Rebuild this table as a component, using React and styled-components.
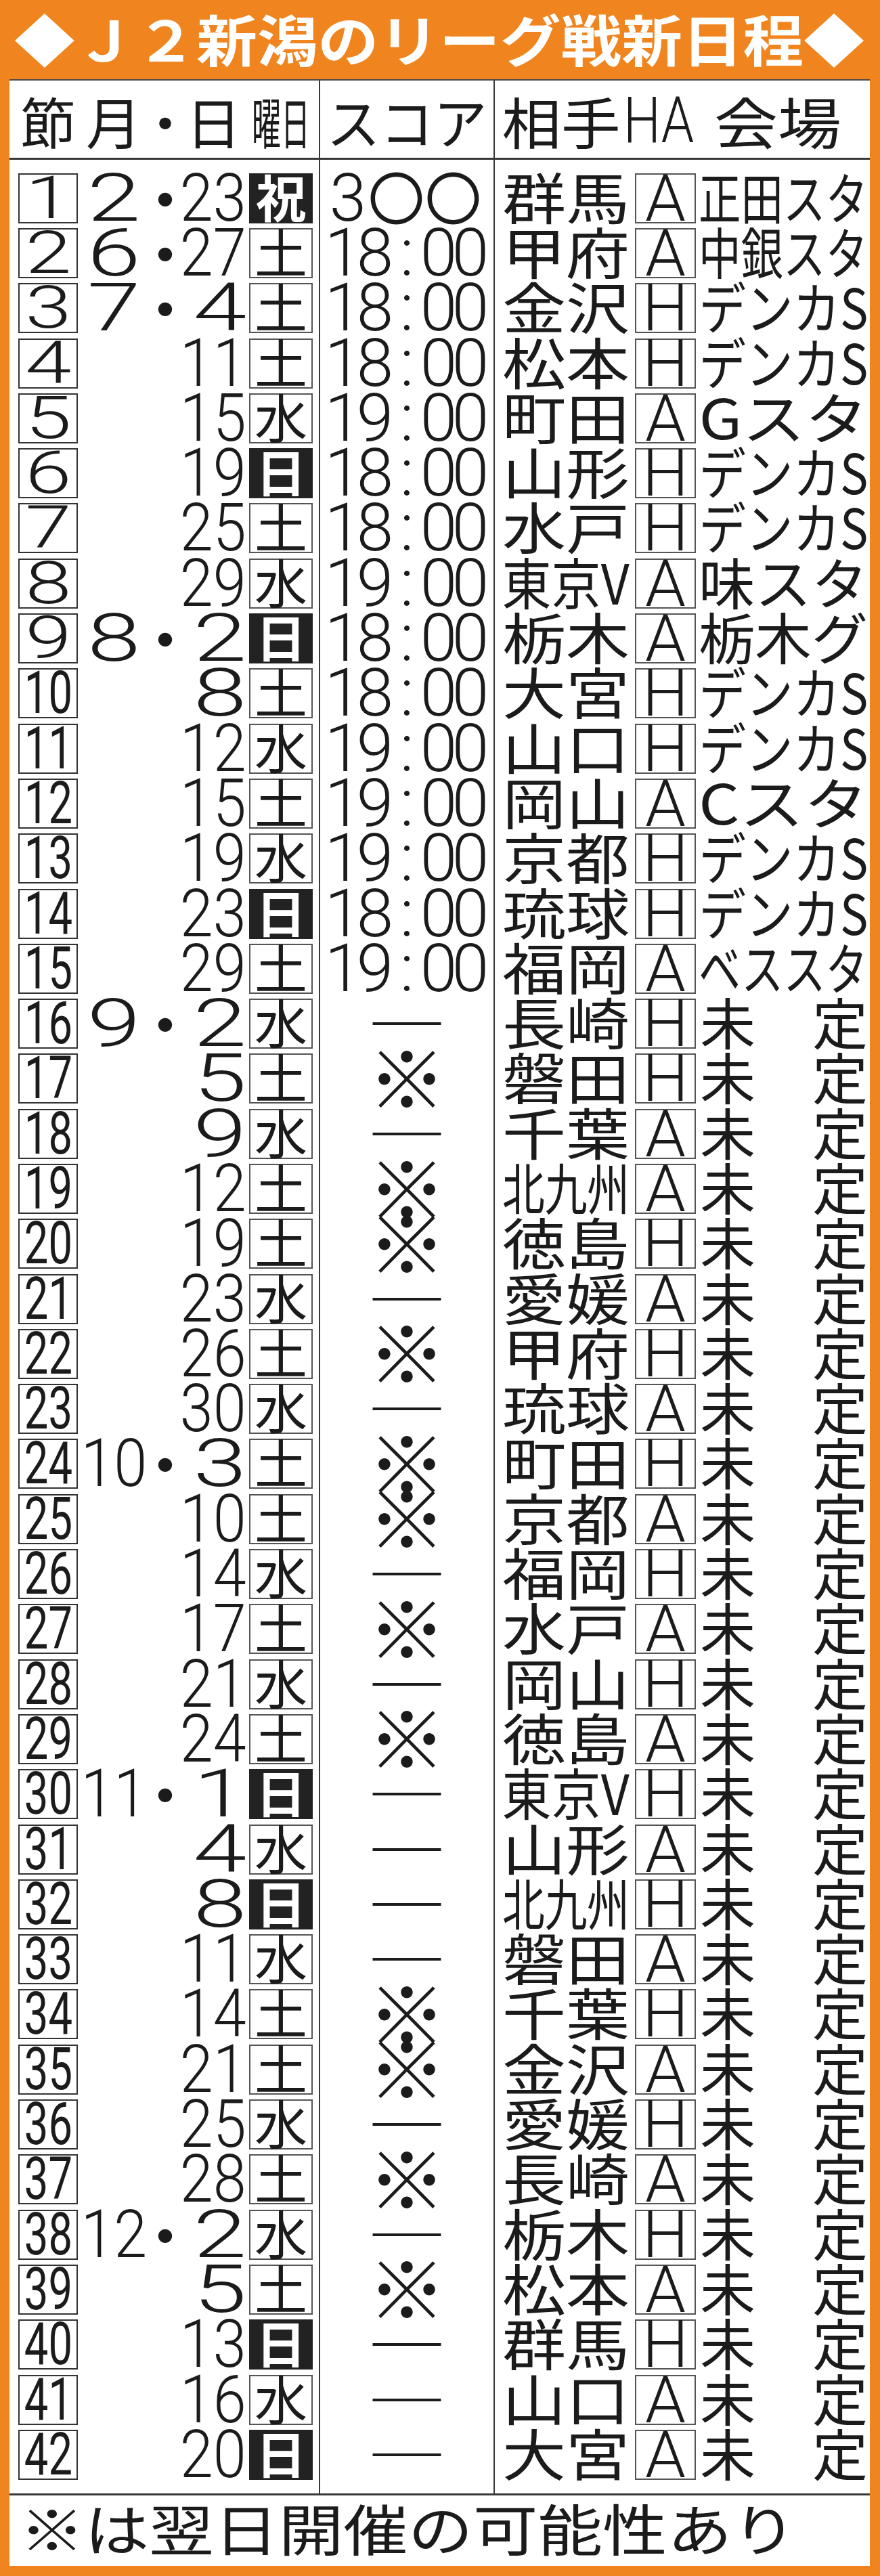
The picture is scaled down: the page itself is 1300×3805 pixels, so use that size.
import React, { useLayoutEffect, useRef, useState } from "react";
import styled, { createGlobalStyle } from "styled-components";

const ORANGE = "#f0851f";
const INK = "#1b1b1b";
const LINE = "#383838";
const JP = `"Noto Sans CJK JP", "Noto Sans", sans-serif`;
const NUM = `Roboto, "Liberation Sans", sans-serif`;
const ROW_H = 81.3;

// no, month, day, weekday, score, opponent, H/A, venue
const games = [
  [1, 2, 23, "祝", "3〇〇", "群馬", "A", "正田スタ"],
  [2, 6, 27, "土", "18:00", "甲府", "A", "中銀スタ"],
  [3, 7, 4, "土", "18:00", "金沢", "H", "デンカS"],
  [4, null, 11, "土", "18:00", "松本", "H", "デンカS"],
  [5, null, 15, "水", "19:00", "町田", "A", "Gスタ"],
  [6, null, 19, "日", "18:00", "山形", "H", "デンカS"],
  [7, null, 25, "土", "18:00", "水戸", "H", "デンカS"],
  [8, null, 29, "水", "19:00", "東京V", "A", "味スタ"],
  [9, 8, 2, "日", "18:00", "栃木", "A", "栃木グ"],
  [10, null, 8, "土", "18:00", "大宮", "H", "デンカS"],
  [11, null, 12, "水", "19:00", "山口", "H", "デンカS"],
  [12, null, 15, "土", "19:00", "岡山", "A", "Cスタ"],
  [13, null, 19, "水", "19:00", "京都", "H", "デンカS"],
  [14, null, 23, "日", "18:00", "琉球", "H", "デンカS"],
  [15, null, 29, "土", "19:00", "福岡", "A", "ベススタ"],
  [16, 9, 2, "水", "―", "長崎", "H", null],
  [17, null, 5, "土", "※", "磐田", "H", null],
  [18, null, 9, "水", "―", "千葉", "A", null],
  [19, null, 12, "土", "※", "北九州", "A", null],
  [20, null, 19, "土", "※", "徳島", "H", null],
  [21, null, 23, "水", "―", "愛媛", "A", null],
  [22, null, 26, "土", "※", "甲府", "H", null],
  [23, null, 30, "水", "―", "琉球", "A", null],
  [24, 10, 3, "土", "※", "町田", "H", null],
  [25, null, 10, "土", "※", "京都", "A", null],
  [26, null, 14, "水", "―", "福岡", "H", null],
  [27, null, 17, "土", "※", "水戸", "A", null],
  [28, null, 21, "水", "―", "岡山", "H", null],
  [29, null, 24, "土", "※", "徳島", "A", null],
  [30, 11, 1, "日", "―", "東京V", "H", null],
  [31, null, 4, "水", "―", "山形", "A", null],
  [32, null, 8, "日", "―", "北九州", "H", null],
  [33, null, 11, "水", "―", "磐田", "A", null],
  [34, null, 14, "土", "※", "千葉", "H", null],
  [35, null, 21, "土", "※", "金沢", "A", null],
  [36, null, 25, "水", "―", "愛媛", "H", null],
  [37, null, 28, "土", "※", "長崎", "A", null],
  [38, 12, 2, "水", "―", "栃木", "H", null],
  [39, null, 5, "土", "※", "松本", "A", null],
  [40, null, 13, "日", "―", "群馬", "H", null],
  [41, null, 16, "水", "―", "山口", "A", null],
  [42, null, 20, "日", "―", "大宮", "A", null],
];

const GlobalStyle = createGlobalStyle`
  html, body {
    margin: 0;
    padding: 0;
    background: ${ORANGE};
  }
  * {
    box-sizing: border-box;
  }
`;

const Page = styled.div`
  width: 1300px;
  height: 3805px;
  background: ${ORANGE};
  padding: 0 15px 15px 14px;
  display: flex;
  flex-direction: column;
  color: ${INK};
  overflow: hidden;
`;

const Title = styled.h1`
  margin: 0;
  height: 117px;
  display: flex;
  align-items: center;
  justify-content: center;
  padding-bottom: 6px;
  font-family: ${JP};
  font-weight: 700;
  font-size: 82px;
  line-height: 1;
  color: #fff;
`;

const Sheet = styled.div`
  flex: 1;
  background: #fff;
  border-top: 2px solid #4a4a4a;
  display: flex;
  flex-direction: column;
`;

const HeadRow = styled.div`
  display: grid;
  grid-template-columns: 459px 258px 1fr;
  height: 117px;
  border-bottom: 3px solid ${LINE};
  font-family: ${JP};
  font-size: 82px;
  line-height: 1;
`;

const HeadCell = styled.div`
  display: flex;
  align-items: center;
  justify-content: ${(p) => p.$justify || "flex-start"};
  padding-left: ${(p) => p.$pad || 0}px;
  padding-top: 4px;
  border-right: ${(p) => (p.$last ? "none" : `2px solid ${LINE}`)};
`;

const HeadSlot = styled.span`
  display: flex;
  flex: none;
  justify-content: center;
  width: ${(p) => p.$w}px;
  margin-left: ${(p) => p.$gap || 0}px;
`;

const HeadLatin = styled.span`
  display: flex;
  font-family: ${NUM};
  font-weight: 300;
  font-size: 94px;
  margin-left: 4px;
`;

const Body = styled.div`
  flex: 1;
  display: grid;
  grid-template-columns: 459px 258px 1fr;
`;

const Column = styled.div`
  display: flex;
  flex-direction: column;
  padding-top: 16px;
  border-right: ${(p) => (p.$last ? "none" : `2px solid ${LINE}`)};
`;

const DateCell = styled.div`
  height: ${ROW_H}px;
  display: flex;
  align-items: center;
  padding-left: 13px;
  font-family: ${NUM};
  line-height: 1;
`;

const NumBox = styled.div`
  width: 88px;
  height: 74px;
  flex: none;
  display: flex;
  align-items: center;
  justify-content: center;
  border: 2.5px solid #333;
  font-size: 88px;
  padding-bottom: 2px;
`;

const Digits = styled.span`
  display: inline-block;
  white-space: nowrap;
  font-weight: ${(p) => p.$weight || 300};
  transform: scaleX(${(p) => p.$scale});
  transform-origin: ${(p) => p.$origin || "center"} center;
`;

const Month = styled.div`
  width: 106px;
  flex: none;
  display: flex;
  justify-content: center;
  font-size: 98px;
`;

const Dot = styled.div`
  width: 46px;
  flex: none;
  display: flex;
  justify-content: center;
  font-family: ${JP};
  font-size: 96px;
  margin-top: -6px;
`;

const Day = styled.div`
  width: 97px;
  flex: none;
  display: flex;
  justify-content: flex-end;
  font-size: 98px;
`;

const WeekBox = styled.div`
  width: 94px;
  height: 74px;
  flex: none;
  margin-left: 4px;
  display: flex;
  align-items: center;
  justify-content: center;
  border: 2px solid ${(p) => (p.$dark ? "#222" : "#555")};
  background: ${(p) => (p.$dark ? "#222" : "#fff")};
  color: ${(p) => (p.$dark ? "#fff" : INK)};
  font-family: ${JP};
  font-weight: ${(p) => (p.$dark ? 700 : 400)};
  font-size: ${(p) => (p.$dark ? 74 : 78)}px;
  padding-bottom: 8px;
`;

const ScoreCell = styled.div`
  height: ${ROW_H}px;
  display: flex;
  align-items: center;
  justify-content: center;
  line-height: 1;
`;

const TimeChar = styled.span`
  width: 47px;
  display: flex;
  justify-content: center;
  font-family: ${NUM};
  font-weight: 300;
  font-size: 98px;
`;

const Circles = styled.span`
  font-family: ${JP};
  font-size: 84px;
  margin-left: 6px;
  padding-bottom: 8px;
`;

const Mark = styled.span`
  display: flex;
  font-family: ${JP};
  font-size: ${(p) => (p.$dash ? 94 : 116)}px;
  padding-bottom: ${(p) => (p.$dash ? 10 : 13)}px;
`;

const OppCell = styled.div`
  height: ${ROW_H}px;
  display: flex;
  align-items: center;
  padding-left: 11px;
  font-family: ${JP};
  font-size: 82px;
  line-height: 1;
`;

const TextSlot = styled.div`
  display: flex;
  flex: none;
  padding-bottom: 8px;
  margin-left: ${(p) => p.$gap || 0}px;
`;

const HaBox = styled.div`
  width: 90px;
  height: 74px;
  flex: none;
  margin-left: 8px;
  display: flex;
  align-items: center;
  justify-content: center;
  border: 2px solid #555;
  font-family: ${NUM};
  font-weight: 300;
  font-size: 96px;
`;

const Spread = styled.div`
  width: 248px;
  flex: none;
  margin-left: 6px;
  display: flex;
  justify-content: space-between;
  padding-bottom: 8px;
`;

const Note = styled.div`
  height: 107px;
  border-top: 3px solid ${LINE};
  display: flex;
  align-items: center;
  padding-left: 15px;
  padding-bottom: 10px;
  font-family: ${JP};
  font-size: 82px;
  line-height: 1;
`;

const FitBox = styled.span`
  display: flex;
  flex: none;
  width: ${(p) => p.$w}px;
  justify-content: ${(p) =>
    p.$align === "left" ? "flex-start" : p.$align === "right" ? "flex-end" : "center"};
`;

const FitText = styled.span`
  display: inline-block;
  flex: none;
  white-space: nowrap;
  transform-origin: ${(p) => p.$align || "center"} center;
`;

// squeezes or stretches a run of text to an exact width, like a newspaper table
function Fit({ width, align = "center", children }) {
  const ref = useRef(null);
  const [scale, setScale] = useState(1);
  useLayoutEffect(() => {
    const natural = ref.current ? ref.current.offsetWidth : 0;
    if (natural) setScale(width / natural);
  }, [width, children]);
  return (
    <FitBox $w={width} $align={align}>
      <FitText ref={ref} $align={align} style={{ transform: `scaleX(${scale})` }}>
        {children}
      </FitText>
    </FitBox>
  );
}

const wide = (n) => n < 10;

const Score = ({ value }) => {
  if (value === "―") {
    return (
      <Mark $dash>
        <Fit width={118}>{value}</Fit>
      </Mark>
    );
  }
  if (value === "※") return <Mark>{value}</Mark>;
  if (value.includes("〇")) {
    return (
      <>
        <TimeChar>{value[0]}</TimeChar>
        <Circles>{value.slice(1)}</Circles>
      </>
    );
  }
  return value.split("").map((c, i) => <TimeChar key={i}>{c}</TimeChar>);
};

export default function App() {
  return (
    <Page>
      <GlobalStyle />
      <Title>
        <Fit width={1256}>◆Ｊ２新潟のリーグ戦新日程◆</Fit>
      </Title>
      <Sheet>
        <HeadRow>
          <HeadCell $pad={13}>
            <HeadSlot $w={88}>節</HeadSlot>
            <HeadSlot $w={106}>月</HeadSlot>
            <HeadSlot $w={46}>・</HeadSlot>
            <HeadSlot $w={97}>日</HeadSlot>
            <HeadSlot $w={94} $gap={4}>
              <Fit width={86}>曜日</Fit>
            </HeadSlot>
          </HeadCell>
          <HeadCell $justify="center">
            <Fit width={237}>スコア</Fit>
          </HeadCell>
          <HeadCell $pad={11} $last>
            <Fit width={175}>相手</Fit>
            <HeadLatin>
              <Fit width={104}>HA</Fit>
            </HeadLatin>
            <HeadSlot $w={188} $gap={30}>
              <Fit width={188}>会場</Fit>
            </HeadSlot>
          </HeadCell>
        </HeadRow>

        <Body>
          <Column>
            {games.map(([no, month, day, wd]) => (
              <DateCell key={no}>
                <NumBox>
                  <Digits $scale={wide(no) ? 1.4 : 0.72} $weight={wide(no) ? 300 : 400}>
                    {no}
                  </Digits>
                </NumBox>
                <Month>{month && <Digits $scale={wide(month) ? 1.45 : 0.9}>{month}</Digits>}</Month>
                <Dot>{month ? "・" : ""}</Dot>
                <Day>
                  <Digits $scale={wide(day) ? 1.45 : 0.9} $origin="right">
                    {day}
                  </Digits>
                </Day>
                <WeekBox $dark={wd === "日" || wd === "祝"}>{wd}</WeekBox>
              </DateCell>
            ))}
          </Column>
          <Column>
            {games.map(([no, , , , score]) => (
              <ScoreCell key={no}>
                <Score value={score} />
              </ScoreCell>
            ))}
          </Column>
          <Column $last>
            {games.map(([no, , , , , opp, ha, venue]) => (
              <OppCell key={no}>
                <TextSlot>
                  <Fit width={188}>{opp}</Fit>
                </TextSlot>
                <HaBox>{ha}</HaBox>
                {venue ? (
                  <TextSlot $gap={4}>
                    <Fit width={250}>{venue}</Fit>
                  </TextSlot>
                ) : (
                  <Spread>
                    <span>未</span>
                    <span>定</span>
                  </Spread>
                )}
              </OppCell>
            ))}
          </Column>
        </Body>

        <Note>
          <Fit width={1148} align="left">
            ※は翌日開催の可能性あり
          </Fit>
        </Note>
      </Sheet>
    </Page>
  );
}
